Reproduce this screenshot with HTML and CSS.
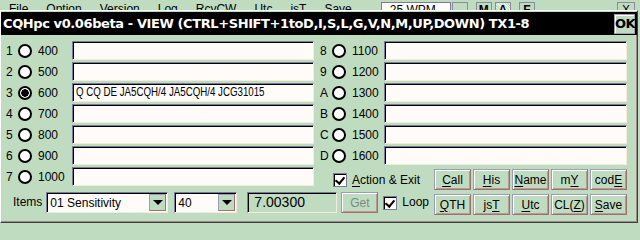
FILE: index.html
```html
<!DOCTYPE html>
<html lang="en">
<head>
  <meta charset="UTF-8">
  <title>CQHpc</title>
  <link rel="stylesheet" href="styles.css">
</head>
<body>
  <div class="menubar">
    <span class="menu">File</span>
    <span class="menu">Option</span>
    <span class="menu">Version</span>
    <span class="menu">Log</span>
    <span class="menu">RcvCW</span>
    <span class="menu">Utc</span>
    <span class="menu">jsT</span>
    <span class="menu">Save</span>
    <span class="wpm">25 WPM</span>
    <span class="wpm-drop"></span>
    <span class="tool">M</span>
    <span class="tool on">A</span>
    <span class="tool">F</span>
    <span class="close">X</span>
  </div>

  <div class="dialog">
    <div class="titlebar">
      <span class="title">CQHpc v0.06beta - VIEW (CTRL+SHIFT+1toD,I,S,L,G,V,N,M,UP,DOWN) TX1-8</span>
      <span class="ok">OK</span>
    </div>

    <div class="body">
      <div class="cols">
        <div class="col left">
          <div class="row"><span class="key">1</span><span class="radio"></span><span class="freq">400</span><div class="field"></div></div>
          <div class="row"><span class="key">2</span><span class="radio"></span><span class="freq">500</span><div class="field"></div></div>
          <div class="row"><span class="key">3</span><span class="radio checked"></span><span class="freq">600</span><div class="field"><span class="msg">Q CQ DE JA5CQH/4 JA5CQH/4 JCG31015</span></div></div>
          <div class="row"><span class="key">4</span><span class="radio"></span><span class="freq">700</span><div class="field"></div></div>
          <div class="row"><span class="key">5</span><span class="radio"></span><span class="freq">800</span><div class="field"></div></div>
          <div class="row"><span class="key">6</span><span class="radio"></span><span class="freq">900</span><div class="field"></div></div>
          <div class="row"><span class="key">7</span><span class="radio"></span><span class="freq">1000</span><div class="field"></div></div>
        </div>

        <div class="col right">
          <div class="row"><span class="key">8</span><span class="radio"></span><span class="freq">1100</span><div class="field"></div></div>
          <div class="row"><span class="key">9</span><span class="radio"></span><span class="freq">1200</span><div class="field"></div></div>
          <div class="row"><span class="key">A</span><span class="radio"></span><span class="freq">1300</span><div class="field"></div></div>
          <div class="row"><span class="key">B</span><span class="radio"></span><span class="freq">1400</span><div class="field"></div></div>
          <div class="row"><span class="key">C</span><span class="radio"></span><span class="freq">1500</span><div class="field"></div></div>
          <div class="row"><span class="key">D</span><span class="radio"></span><span class="freq">1600</span><div class="field"></div></div>
          <div class="action-row">
            <span class="check"></span><span class="check-label"><u>A</u>ction &amp; Exit</span>
            <div class="buttons">
              <span class="btn"><u>C</u>all</span>
              <span class="btn"><u>H</u>is</span>
              <span class="btn"><u>N</u>ame</span>
              <span class="btn">m<u>Y</u></span>
              <span class="btn">cod<u>E</u></span>
            </div>
          </div>
        </div>
      </div>

      <div class="bottom">
        <span class="items-label">Items</span>
        <div class="combo wide"><span class="combo-text">01 Sensitivity</span><span class="drop"></span></div>
        <div class="combo narrow"><span class="combo-text">40</span><span class="drop"></span></div>
        <div class="readout">7.00300</div>
        <span class="btn get">Get</span>
        <span class="check"></span><span class="check-label">Loop</span>
        <div class="buttons">
          <span class="btn"><u>Q</u>TH</span>
          <span class="btn">js<u>T</u></span>
          <span class="btn"><u>U</u>tc</span>
          <span class="btn">CL(<u>Z</u>)</span>
          <span class="btn"><u>S</u>ave</span>
        </div>
      </div>
    </div>
  </div>
</body>
</html>
```

FILE: styles.css
```css
body {
  margin: 0;
  padding: 0;
  width: 640px;
  height: 240px;
  overflow: hidden;
  background-color: #c0dcc0;
  font-family: "Liberation Sans", Arial, sans-serif;
  font-size: 12px;
  color: #000;
}

u {
  text-decoration-thickness: 1px;
  text-underline-offset: 2px;
}

/* parent window strip, mostly hidden behind the dialog */
.menubar {
  height: 10px;
  overflow: hidden;
  display: flex;
  align-items: flex-start;
  padding-top: 2px;
  box-sizing: border-box;
}

.menu {
  margin-left: 9px;
  margin-right: 9px;
  line-height: 14px;
}

.wpm {
  margin-left: 20px;
  width: 60px;
  height: 16px;
  background-color: #fffbf8;
  border: 1px solid #7a7a9a;
  padding-left: 8px;
  line-height: 14px;
}

.wpm-drop {
  width: 14px;
  height: 16px;
  border: 1px solid #8a8aa0;
  margin-left: 1px;
}

.tool {
  width: 14px;
  height: 16px;
  border: 1px solid #8a8aa0;
  margin-left: 8px;
  text-align: center;
  font-weight: bold;
  line-height: 14px;
}

.tool.on {
  margin-left: 3px;
  background-image: repeating-linear-gradient(45deg, #e8f4e8 0 1px, #c0dcc0 1px 2px);
}

.close {
  margin-left: auto;
  margin-right: 5px;
  width: 16px;
  height: 16px;
  border: 1px solid #8a8aa0;
  text-align: center;
  line-height: 14px;
}

/* dialog */
.dialog {
  width: 638px;
  height: 213px;
  box-sizing: border-box;
  border-top: 1px solid #fff;
  border-left: 1px solid #fff;
  border-right: 1px solid #404040;
  border-bottom: 1px solid #404040;
  box-shadow: inset -1px -1px #a08888;
  padding-top: 1px;
}

.titlebar {
  height: 23px;
  background-color: #000;
  color: #fff;
  display: flex;
  align-items: center;
  padding-left: 2px;
}

.title {
  font-family: "DejaVu Sans", sans-serif;
  font-weight: bold;
  font-size: 13px;
  white-space: nowrap;
  letter-spacing: -0.4px;
}

.ok {
  margin-left: auto;
  margin-right: 2px;
  width: 21px;
  height: 20px;
  box-sizing: border-box;
  background-color: #c0dcc0;
  color: #000;
  border: 1px solid #a0a0b0;
  box-shadow: inset 1px 1px #fff;
  font-family: "DejaVu Sans", sans-serif;
  font-weight: bold;
  font-size: 13px;
  letter-spacing: -0.5px;
  text-align: center;
  line-height: 18px;
}

.body {
  padding-top: 6px;
}

.cols {
  display: flex;
}

.col {
  display: flex;
  flex-direction: column;
  gap: 2px;
}

.col.left {
  width: 313px;
  padding-left: 5px;
  box-sizing: border-box;
}

.col.right {
  width: 307px;
  margin-left: 6px;
}

.row {
  display: flex;
  align-items: center;
  height: 19px;
}

.key {
  width: 12px;
}

.radio {
  width: 14px;
  height: 14px;
  box-sizing: border-box;
  border: 2px solid #000;
  border-radius: 50%;
  background-color: #fff;
}

.radio.checked {
  background: radial-gradient(circle, #000 0 3.5px, #fff 4px);
}

.freq {
  width: 28px;
  margin-left: 6px;
}

.left .freq {
  width: 34px;
}

.right .freq {
  width: 32px;
}

.field {
  flex: 1;
  height: 19px;
  box-sizing: border-box;
  background-color: #fffbf8;
  border: 1px solid;
  border-color: #7a7a9a #f4ecd8 #f4ecd8 #7a7a9a;
  box-shadow: inset 1px 1px #000;
  padding-left: 3px;
  line-height: 17px;
  white-space: nowrap;
  overflow: hidden;
}

/* the message font is narrower than the label font */
.msg {
  display: inline-block;
  font-size: 12px;
  transform: scaleX(0.81);
  transform-origin: left center;
}

.action-row {
  display: flex;
  align-items: center;
  margin-top: 2px;
  height: 21px;
}

.check {
  width: 14px;
  height: 14px;
  box-sizing: border-box;
  border: 1px solid #7a7a9a;
  box-shadow: inset 1px 1px #000;
  background-color: #fffbf8;
  position: relative;
}

.check::after {
  content: "";
  position: absolute;
  left: 3px;
  top: 1px;
  width: 4px;
  height: 7px;
  border: solid #000;
  border-width: 0 2px 2px 0;
  transform: rotate(40deg);
}

.action-row .check {
  margin-left: 13px;
}

.check-label {
  margin-left: 5px;
}

.buttons {
  display: flex;
  gap: 2px;
  margin-left: auto;
}

.btn {
  width: 37px;
  height: 21px;
  box-sizing: border-box;
  border: 1px solid;
  border-color: #9c9cb8 #a07070 #a07070 #9c9cb8;
  box-shadow: inset 1px 1px #fff, inset -1px -1px #b89898;
  display: flex;
  align-items: center;
  justify-content: center;
  white-space: nowrap;
}

.bottom {
  display: flex;
  align-items: flex-start;
  margin-top: 2px;
  padding-left: 12px;
  width: 626px;
  box-sizing: border-box;
}

.items-label {
  line-height: 21px;
}

.combo {
  height: 21px;
  box-sizing: border-box;
  display: flex;
  background-color: #fffbf8;
  border: 1px solid;
  border-color: #7a7a9a #f4ecd8 #f4ecd8 #7a7a9a;
  box-shadow: inset 1px 1px #000;
  padding: 2px 1px 1px 3px;
}

.combo.wide {
  width: 122px;
  margin-left: 4px;
}

.combo.narrow {
  width: 63px;
  margin-left: 6px;
}

.combo-text {
  flex: 1;
  line-height: 16px;
}

.drop {
  width: 17px;
  height: 17px;
  box-sizing: border-box;
  margin-top: -1px;
  background-color: #c0dcc0;
  border: 1px solid;
  border-color: #9c9cb8 #a07070 #a07070 #9c9cb8;
  position: relative;
}

.drop::after {
  content: "";
  position: absolute;
  left: 3px;
  top: 5px;
  border-left: 5px solid transparent;
  border-right: 5px solid transparent;
  border-top: 5px solid #000;
}

.readout {
  width: 90px;
  height: 21px;
  margin-left: 10px;
  box-sizing: border-box;
  border: 1px solid;
  border-color: #7a7a9a #f4ecd8 #f4ecd8 #7a7a9a;
  box-shadow: inset 1px 1px #000;
  font-size: 14px;
  line-height: 19px;
  padding-left: 6px;
}

.btn.get {
  margin-left: 4px;
  color: #7a8a8a;
}

.bottom .check {
  margin-left: 5px;
  margin-top: 4px;
}

.bottom .check-label {
  line-height: 21px;
}

.bottom .buttons {
  margin-top: 2px;
}
```
